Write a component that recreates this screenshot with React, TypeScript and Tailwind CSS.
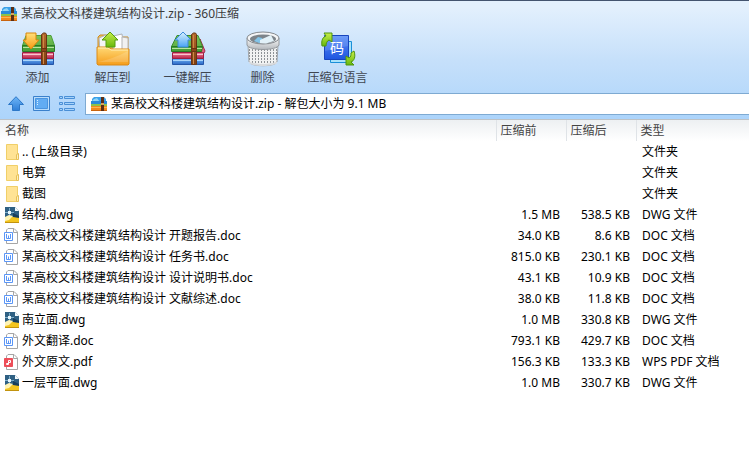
import React from "react";

type Kind = "folder" | "dwg" | "doc" | "pdf";
type Entry = { name: string; before: string; after: string; type: string; kind: Kind };

const entries: Entry[] = [
  { name: ".. (上级目录)", before: "", after: "", type: "文件夹", kind: "folder" },
  { name: "电算", before: "", after: "", type: "文件夹", kind: "folder" },
  { name: "截图", before: "", after: "", type: "文件夹", kind: "folder" },
  { name: "结构.dwg", before: "1.5 MB", after: "538.5 KB", type: "DWG 文件", kind: "dwg" },
  { name: "某高校文科楼建筑结构设计 开题报告.doc", before: "34.0 KB", after: "8.6 KB", type: "DOC 文档", kind: "doc" },
  { name: "某高校文科楼建筑结构设计 任务书.doc", before: "815.0 KB", after: "230.1 KB", type: "DOC 文档", kind: "doc" },
  { name: "某高校文科楼建筑结构设计 设计说明书.doc", before: "43.1 KB", after: "10.9 KB", type: "DOC 文档", kind: "doc" },
  { name: "某高校文科楼建筑结构设计 文献综述.doc", before: "38.0 KB", after: "11.8 KB", type: "DOC 文档", kind: "doc" },
  { name: "南立面.dwg", before: "1.0 MB", after: "330.8 KB", type: "DWG 文件", kind: "dwg" },
  { name: "外文翻译.doc", before: "793.1 KB", after: "429.7 KB", type: "DOC 文档", kind: "doc" },
  { name: "外文原文.pdf", before: "156.3 KB", after: "133.3 KB", type: "WPS PDF 文档", kind: "pdf" },
  { name: "一层平面.dwg", before: "1.0 MB", after: "330.7 KB", type: "DWG 文件", kind: "dwg" },
];

/* Gradients shared by all the icons. */
function Gradients() {
  const list: [string, string, string][] = [
    ["green", "#7cc458", "#5fb046"],
    ["red", "#f0849b", "#b8224a"],
    ["blue", "#6db4f5", "#2b66c4"],
    ["strap", "#b56a2c", "#7a3d12"],
    ["orange", "#ffe07a", "#f79a12"],
    ["sky", "#d9f1ff", "#4aa4f5"],
    ["lime", "#c8ee4a", "#67b80c"],
    ["folder", "#ffd976", "#f59d1b"],
    ["tile", "#5a8ff8", "#1f55e0"],
    ["nav", "#6db5f7", "#2f7fd8"],
    ["metal", "#fafafa", "#b4b8bc"],
  ];
  return (
    <svg className="absolute size-0" aria-hidden="true">
      <defs>
        {list.map(([id, a, b]) => (
          <linearGradient key={id} id={id} x1="0" y1="0" x2="0" y2="1">
            <stop offset="0" stopColor={a} />
            <stop offset="1" stopColor={b} />
          </linearGradient>
        ))}
        <pattern id="mesh" width="3" height="3" patternUnits="userSpaceOnUse">
          <rect width="3" height="3" fill="#f1f2f2" />
          <rect width="1" height="2" x="1" fill="#8d9296" />
        </pattern>
      </defs>
    </svg>
  );
}

function ArchiveIcon() {
  return (
    <svg className="size-4 shrink-0" viewBox="0 0 16 16" aria-hidden="true">
      <path d="M1 3l2-2h10l2 2v4H1z" fill="#3aa0e8" />
      <path d="M0 6l3-3 3-1 3 4z" fill="#8fd5f8" />
      <path d="M0 5h16v4H0z" fill="#2a8ad8" />
      <path d="M0 8h16v2H0z" fill="#8bc34a" />
      <path d="M0 10h16v5H0z" fill="#f08a1c" />
      <path d="M0 11h16v1H0z" fill="#ffb54c" />
      <path d="M0 14h16v1H0z" fill="#c9640f" />
      <path d="M10 1h3v14h-3z" fill="#5c2f14" />
      <path d="M10 7h3v2h-3z" fill="#d9a15b" />
    </svg>
  );
}

function Books({ open }: { open?: boolean }) {
  return (
    <>
      <path d="M2.500 27.500h31v6h-31z" fill="url(#blue)" stroke="#2556a8" />
      <path d="M3 29.500h30" stroke="#a9d4fa" />
      <path d="M2.500 21.500h31v6h-31z" fill="url(#red)" stroke="#9c1e43" />
      <path d="M3 23.500h30" stroke="#fbc3cf" />
      {open ? (
        <>
          <path d="M30 8l5 12-1 2-5-2z" fill="#e0607c" stroke="#a52a4c" />
          <path d="M7 4.500h21l4.500 11h-31z" fill="url(#green)" stroke="#3a8f2c" />
          <path d="M1.500 15.500h31l-1 5h-30z" fill="#46a138" stroke="#2a7a24" />
          <path d="M2 17.500h30" stroke="#b8e4a0" />
        </>
      ) : (
        <>
          <path d="M6 4.500h25l3.500 10h-32z" fill="url(#green)" stroke="#4a9f38" />
          <path d="M2.500 14.500h32v6h-32z" fill="#4ba33a" stroke="#2c7a27" />
          <path d="M3 16.500h31" stroke="#b8e4a0" />
        </>
      )}
      <path d="M21.500 3.500l2-1.500h2l1 1.500v30h-5z" fill="url(#strap)" stroke="#693411" />
      <path d="M23.500 4v29" stroke="#cf8744" />
      <path d="M21.500 17.500h5v3h-5z" fill="#8a4519" stroke="#693411" />
    </>
  );
}

function AddIcon() {
  return (
    <svg className="size-9" viewBox="0 0 36 36" aria-hidden="true">
      <Books />
      <path d="M6 2h10v7h3L11 18 3 9h3z" fill="url(#orange)" stroke="#d9860d" strokeLinejoin="round" />
    </svg>
  );
}

function ExtractToIcon() {
  return (
    <svg className="size-9" viewBox="0 0 36 36" aria-hidden="true">
      <path d="M3 6l2-2h10l2 2h16v14H3z" fill="#eebc58" stroke="#c98b27" />
      <path d="M4 7l7-3 3 17H5z" fill="#f5f5f5" stroke="#aeb3b8" />
      <path d="M18 5l9-2 2 17H18z" fill="#fff" stroke="#aeb3b8" />
      <path d="M27 6l6 1v14h-6z" fill="#f1f1f1" stroke="#b5b5b5" />
      <path d="M2 16h11l3 2h18v15l-1 1H3l-1-1z" fill="url(#folder)" stroke="#dc8a16" />
      <path d="M3 17h10l3 2h17" fill="none" stroke="#fff0b8" />
      <path d="M3 31C12 29 22 26 33 20v11z" fill="#fff" opacity=".16" />
      <path d="M15 1l8 8h-3v7h-9V9H7z" fill="url(#lime)" stroke="#559d10" strokeLinejoin="round" />
    </svg>
  );
}

function OneClickIcon() {
  return (
    <svg className="size-9" viewBox="0 0 36 36" aria-hidden="true">
      <Books open />
      <path d="M13 1l8 8h-3v7H8V9H5z" fill="url(#sky)" stroke="#3c8bdc" strokeLinejoin="round" />
    </svg>
  );
}

function DeleteIcon() {
  return (
    <svg className="size-9" viewBox="0 0 36 36" aria-hidden="true">
      <path d="M3 14l1 17c2 5 26 5 28 0l1-17z" fill="url(#mesh)" stroke="#a2a6aa" />
      <path d="M4 30c3 4 25 4 28 0v2c-3 4-25 4-28 0z" fill="#d9dbdd" />
      <path d="M2 7v7c2 6 30 6 32 0V7z" fill="url(#metal)" stroke="#969a9e" />
      <ellipse cx="18" cy="7" rx="16" ry="6" fill="#f4f5f6" stroke="#84898e" />
      <ellipse cx="18" cy="8" rx="13" ry="4.500" fill="#7d848a" />
      <path d="M9 10l4-4 4 1 2 5-5 0z" fill="#83c4e8" />
      <path d="M15 9l11-5 3 6-8 2.500-6-.5z" fill="#e2f1f8" />
    </svg>
  );
}

function LanguageIcon() {
  return (
    <svg className="size-9" viewBox="0 0 36 36" aria-hidden="true">
      <path d="M10.500 10.500h21v21h-21z" fill="#a9e2fb" stroke="#1a8fd8" />
      <path d="M4.500 4.500h24v24h-24z" fill="url(#tile)" stroke="#1845bd" />
      <path d="M5 5h23v10L5 20z" fill="#fff" opacity=".12" />
      <text x="17" y="22" textAnchor="middle" fill="#fff" fontSize="14" fontFamily="Noto Sans CJK SC, sans-serif">码</text>
      <path d="M2 15C1 9 3 6 6 5L4 2h8v9l-3-2c-2 1-3 3-3 6z" fill="url(#lime)" stroke="#4f940e" strokeLinejoin="round" />
      <path d="M34 20c2 6 0 10-3 11l3 3h-8v-9l3 2c2-1 2-3 2-5z" fill="url(#lime)" stroke="#4f940e" strokeLinejoin="round" />
    </svg>
  );
}

function FileIcon({ kind }: { kind: Kind }) {
  if (kind === "folder")
    return (
      <svg className="size-4 shrink-0" viewBox="0 0 16 16" aria-hidden="true">
        <path d="M2.500.5h11v15h-11z" fill="#ffe394" stroke="#f0cf68" />
        <path d="M12.500 15.500v-5l2-1v6z" fill="#fff0b8" stroke="#e6c05a" />
      </svg>
    );
  if (kind === "dwg")
    return (
      <svg className="size-4 shrink-0" viewBox="0 0 16 16" aria-hidden="true">
        <path d="M1 0h10l4 4v12H1z" fill="#2f6083" />
        <path d="M11 0l4 4h-4z" fill="#f4fafc" />
        <path d="M5.500 1v8M1 5.500h9" stroke="#7fb0cc" />
        <path d="M4 4h3v3H4z" fill="#e8f5fb" />
        <path d="M9 6l6 3v2H9z" fill="#173e5c" />
        <path d="M1 11l4-2 4 1 6 1v5H1z" fill="#f3c51f" />
        <path d="M1 10l4-2 4 1-4 4-4 1z" fill="#fff3b4" />
        <path d="M1 15.500h14" stroke="#c2930f" />
      </svg>
    );
  const pdf = kind === "pdf";
  return (
    <svg className="size-4 shrink-0" viewBox="0 0 16 16" aria-hidden="true">
      <path d="M4 .5h6l3.500 3.500v11.500H2.500V2z" fill="#fff" stroke="#a6a6a6" />
      <path d="M9.500 1v3.500h4" fill="none" stroke="#a6a6a6" />
      <path d="M.5 4.500h8v8h-8z" fill={pdf ? "#ed4e59" : "#fff"} stroke={pdf ? "#ed4e59" : "#5b96f6"} />
      {pdf ? (
        <path d="M4.500 9.500H2.500v1h2v-4h2v2h-2" fill="none" stroke="#fff" />
      ) : (
        <path d="M2.500 6v4.500h4V6M4.500 7.500v3" fill="none" stroke="#5b96f6" />
      )}
    </svg>
  );
}

const tools = [
  { label: "添加", Icon: AddIcon },
  { label: "解压到", Icon: ExtractToIcon },
  { label: "一键解压", Icon: OneClickIcon },
  { label: "删除", Icon: DeleteIcon },
  { label: "压缩包语言", Icon: LanguageIcon },
];

export default function App() {
  return (
    <div className="min-h-screen bg-white font-['Noto_Sans','Noto_Sans_CJK_SC',sans-serif] text-xs text-black">
      <Gradients />
      <header className="border-t border-[#43546f] bg-linear-to-b from-[#e3f0fd] from-5% via-[#c6e0fa] via-50% to-[#acd4fb]">
        <div className="flex h-[26px] items-center gap-1 pl-px text-[#3c3c3c]">
          <ArchiveIcon />
          <h1>某高校文科楼建筑结构设计.zip - 360压缩</h1>
        </div>
        <nav className="flex h-[62px] items-start pt-1" aria-label="工具栏">
          {tools.map(({ label, Icon }) => (
            <button key={label} type="button" className="flex w-[75px] flex-col items-center gap-[3px] whitespace-nowrap text-[#3f4650]">
              <Icon />
              <span>{label}</span>
            </button>
          ))}
        </nav>
        <div className="flex h-[30px] items-center pl-2">
          <div className="flex w-[77px] shrink-0 gap-[9px]">
            <button type="button" aria-label="向上">
              <svg className="size-4" viewBox="0 0 16 16">
                <path d="M8 .7L15.500 8.500h-4v6h-7v-6h-4z" fill="url(#nav)" stroke="#2d78c8" strokeLinejoin="round" />
              </svg>
            </button>
            <button type="button" aria-label="预览">
              <svg className="h-4 w-[17px]" viewBox="0 0 17 16">
                <path d="M.5.5h16v14H.5z" fill="#b9dcfb" stroke="#3a80cc" />
                <path d="M2.500 2.500h12v10h-12z" fill="#62acf3" stroke="#4a94df" />
                <path d="M4.500 4v5" stroke="#d9efff" strokeDasharray="1 1" />
              </svg>
            </button>
            <button type="button" aria-label="列表">
              <svg className="size-4" viewBox="0 0 16 16" fill="#a5d2fb" stroke="#4a8fd6">
                <path d="M.5.5h3v2h-3zM.5 6.500h3v2h-3zM.5 12.500h3v2h-3zM5.500.5h10v2h-10zM5.500 6.500h10v2h-10zM5.500 12.500h10v2h-10z" />
              </svg>
            </button>
          </div>
          <div className="flex h-[22px] min-w-0 flex-1 items-center gap-1 border border-r-0 border-[#7eaad2] bg-white pl-[5px]">
            <ArchiveIcon />
            <input
              type="text"
              aria-label="路径"
              className="min-w-0 flex-1 bg-transparent outline-none"
              defaultValue="某高校文科楼建筑结构设计.zip - 解包大小为 9.1 MB"
            />
          </div>
        </div>
      </header>
      <main className="border-t border-[#bdc2c7]">
        <table className="w-full table-fixed border-collapse whitespace-nowrap">
          <colgroup>
            <col className="w-[496px]" />
            <col className="w-[70px]" />
            <col className="w-[70px]" />
            <col />
          </colgroup>
          <thead className="bg-linear-to-b from-[#edf0f2] to-white text-left text-[#444]">
            <tr className="h-[21px]">
              <th scope="col" className="p-0 pl-[5px] font-normal">名称</th>
              <th scope="col" className="border-l border-[#dfe3e7] p-0 pl-1 font-normal">压缩前</th>
              <th scope="col" className="border-l border-[#dfe3e7] p-0 pl-1 font-normal">压缩后</th>
              <th scope="col" className="border-l border-[#dfe3e7] p-0 pl-1 font-normal">类型</th>
            </tr>
          </thead>
          <tbody>
            {entries.map((e) => (
              <tr key={e.name} className="h-[21px]">
                <td className="p-0 pl-1">
                  <div className="flex items-center gap-0.5">
                    <FileIcon kind={e.kind} />
                    <span>{e.name}</span>
                  </div>
                </td>
                <td className="p-0 pr-1.5 text-right">{e.before}</td>
                <td className="p-0 pr-1.5 text-right">{e.after}</td>
                <td className="p-0 pl-1.5">{e.type}</td>
              </tr>
            ))}
          </tbody>
        </table>
      </main>
    </div>
  );
}
